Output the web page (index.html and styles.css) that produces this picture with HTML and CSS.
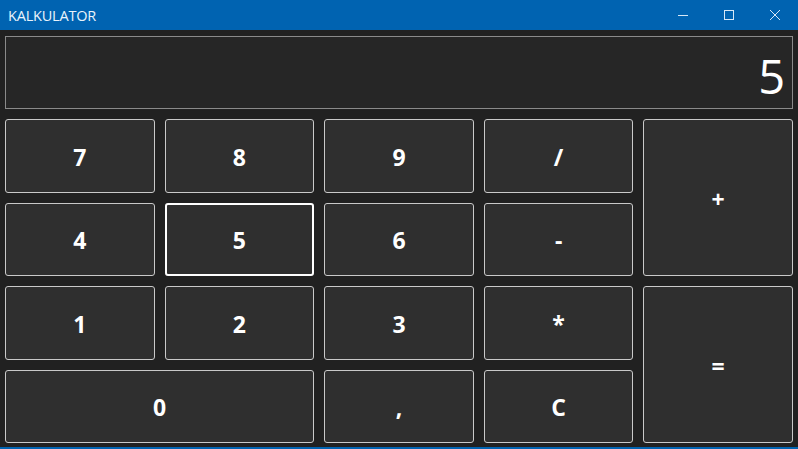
FILE: index.html
```html
<!DOCTYPE html>
<html lang="pl">
<head>
  <meta charset="UTF-8">
  <title>Kalkulator</title>
  <link rel="stylesheet" href="styles.css">
</head>
<body>
  <div class="window">
    <div class="titlebar">
      <span class="title">KALKULATOR</span>
      <div class="controls">
        <span class="ctrl">
          <svg width="10" height="10" viewBox="0 0 10 10"><path d="M0 5.5h10" stroke="currentColor" stroke-width="1"/></svg>
        </span>
        <span class="ctrl">
          <svg width="10" height="10" viewBox="0 0 10 10"><rect x="0.5" y="0.5" width="9" height="9" fill="none" stroke="currentColor" stroke-width="1"/></svg>
        </span>
        <span class="ctrl">
          <svg width="10" height="10" viewBox="0 0 10 10"><path d="M0 0L10 10M10 0L0 10" stroke="currentColor" stroke-width="1"/></svg>
        </span>
      </div>
    </div>

    <div class="calc">
      <div class="display">5</div>

      <button class="key">7</button>
      <button class="key">8</button>
      <button class="key">9</button>
      <button class="key">/</button>
      <button class="key tall">+</button>

      <button class="key">4</button>
      <button class="key focused">5</button>
      <button class="key">6</button>
      <button class="key">-</button>

      <button class="key">1</button>
      <button class="key">2</button>
      <button class="key">3</button>
      <button class="key">*</button>
      <button class="key tall">=</button>

      <button class="key wide">0</button>
      <button class="key">,</button>
      <button class="key">C</button>
    </div>
  </div>
</body>
</html>
```

FILE: styles.css
```css
* { margin: 0; padding: 0; box-sizing: border-box; }
html, body {
  width: 100%;
  height: 100%;
  overflow: hidden;
  background-color: #212121;
  font-family: 'Open Sans', 'Noto Sans', sans-serif;
}
.window {
  display: flex;
  flex-direction: column;
  height: 449px;
  border-bottom: 2px solid #0063b1;
}
.titlebar {
  height: 30px;
  flex: none;
  display: flex;
  align-items: center;
  justify-content: space-between;
  background-color: #0063b1;
  color: #eaf3fb;
}
.title {
  padding-left: 8px;
  font-size: 14.5px;
  letter-spacing: -0.2px;
}
.controls {
  display: flex;
  height: 100%;
}
.ctrl {
  width: 46px;
  display: flex;
  align-items: center;
  justify-content: center;
  color: #d6e8f7;
}
.ctrl svg { display: block; }
.calc {
  flex: 1;
  display: grid;
  grid-template-columns: repeat(5, 1fr);
  grid-template-rows: repeat(5, 1fr);
  gap: 10px;
  padding: 6px 5px 4px;
}
.display {
  grid-column: 1 / -1;
  display: flex;
  align-items: center;
  justify-content: flex-end;
  padding: 6px 7px 0 0;
  background-color: #262626;
  border: 1px solid #8a8a8a;
  color: #ffffff;
  font-size: 47px;
  font-weight: 400;
}
.key {
  background-color: #2f2f2f;
  border: 1px solid #c9c9c9;
  border-radius: 3px;
  color: #ffffff;
  font-family: 'Open Sans', 'Noto Sans', sans-serif;
  font-size: 23px;
  font-weight: 700;
  padding-top: 2px;
}
.key.tall { grid-row: span 2; }
.key.wide { grid-column: span 2; }
.key.focused {
  border: 2px solid #ffffff;
}
```
